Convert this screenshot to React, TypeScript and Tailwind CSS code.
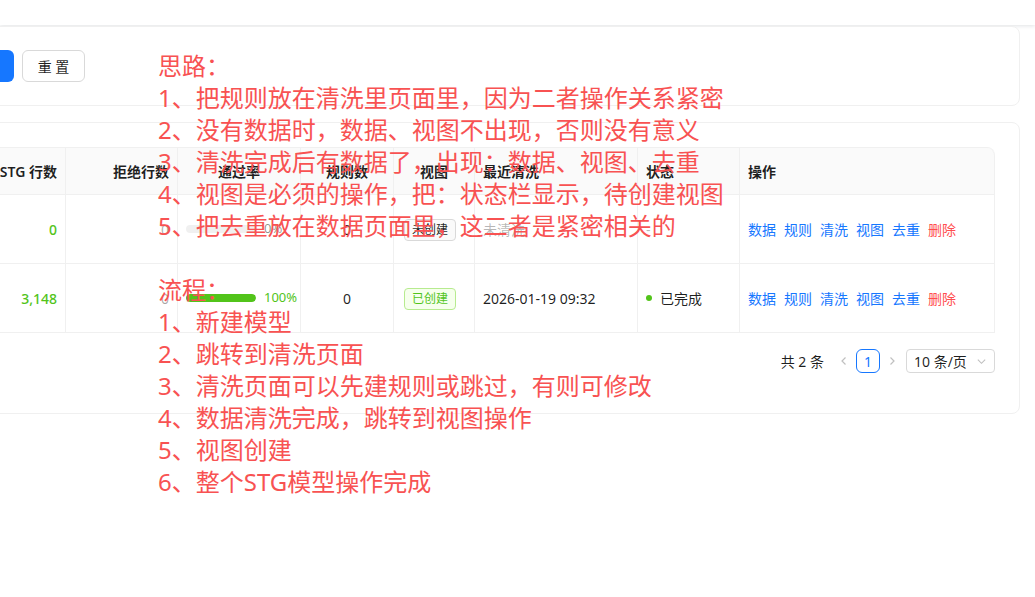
import React from 'react';

type Row = {
  name: string;
  source: string;
  srcRows: string;
  stgRows: string;
  rejected: string;
  rate: number;
  rules: string;
  viewCreated: boolean;
  lastClean: string | null;
  done: boolean;
};

const rows: Row[] = [
  { name: 'stg_customer_info', source: 'ods.customer_info', srcRows: '0', stgRows: '0', rejected: '0', rate: 0, rules: '0', viewCreated: false, lastClean: null, done: false },
  { name: 'stg_order_detail', source: 'ods.order_detail', srcRows: '3,148', stgRows: '3,148', rejected: '0', rate: 100, rules: '0', viewCreated: true, lastClean: '2026-01-19 09:32', done: true },
];

const notes = [
  '思路：',
  '1、把规则放在清洗里页面里，因为二者操作关系紧密',
  '2、没有数据时，数据、视图不出现，否则没有意义',
  '3、清洗完成后有数据了，出现：数据、视图、去重',
  '4、视图是必须的操作，把：状态栏显示，待创建视图',
  '5、把去重放在数据页面里，这二者是紧密相关的',
  '',
  '流程：',
  '1、新建模型',
  '2、跳转到清洗页面',
  '3、清洗页面可以先建规则或跳过，有则可修改',
  '4、数据清洗完成，跳转到视图操作',
  '5、视图创建',
  '6、整个STG模型操作完成',
];

const th = 'h-[47px] px-2 border-r border-b border-[#f0f0f0] font-semibold text-[rgba(0,0,0,0.88)] text-[14px]';
// cell base, text colour is set per cell
const td = 'h-[69px] px-2 border-r border-b border-[#f0f0f0] text-[14px]';
const ink = 'text-[rgba(0,0,0,0.88)]';

export default function App() {
  return (
    <div className="relative min-h-screen w-full overflow-hidden bg-white font-['Noto_Sans','Noto_Sans_CJK_SC',sans-serif]">
      {/* top bar */}
      <div className="h-[25px] bg-white shadow-[0_1px_4px_rgba(0,21,41,0.12)]" />

      <div className="ml-[-600px] pl-4 pr-[15px] pt-[1px]">
        {/* search card */}
        <div className="h-[80px] rounded-lg border border-[#f0f0f0] bg-white px-6 flex items-center gap-4">
          <div className="flex items-center gap-2 text-[14px]">
            <span>模型名称：</span>
            <div className="h-8 w-[200px] rounded-md border border-[#d9d9d9]" />
          </div>
          <div className="flex items-center gap-2 text-[14px]">
            <span>状态：</span>
            <div className="h-8 w-[150px] rounded-md border border-[#d9d9d9]" />
          </div>
          <div className="flex items-center gap-2">
            <button className="h-8 w-[63px] rounded-md bg-[#1677ff] text-white text-[14px]">查 询</button>
            <button className="h-8 w-[63px] rounded-md border border-[#d9d9d9] bg-white text-[14px] text-[rgba(0,0,0,0.88)]">重 置</button>
          </div>
        </div>

        {/* table card */}
        <div className="mt-4 rounded-lg border border-[#f0f0f0] bg-white px-6 pt-6 pb-6">
          <table className="w-full table-fixed border-separate border-spacing-0 border-l border-t border-[#f0f0f0] rounded-t-lg">
            <colgroup>
              <col className="w-[200px]" />
              <col className="w-[200px]" />
              <col className="w-[112px]" />
              <col className="w-[112px]" />
              <col className="w-[112px]" />
              <col className="w-[123px]" />
              <col className="w-[93px]" />
              <col className="w-[81px]" />
              <col className="w-[163px]" />
              <col className="w-[102px]" />
              <col />
            </colgroup>
            <thead className="bg-[#fafafa]">
              <tr>
                <th className={`${th} text-left rounded-tl-lg`}>模型名称</th>
                <th className={`${th} text-left`}>源表</th>
                <th className={`${th} text-right`}>源行数</th>
                <th className={`${th} text-right`}>STG 行数</th>
                <th className={`${th} text-right`}>拒绝行数</th>
                <th className={`${th} text-center`}>通过率</th>
                <th className={`${th} text-center`}>规则数</th>
                <th className={`${th} text-center`}>视图</th>
                <th className={`${th} text-left`}>最近清洗</th>
                <th className={`${th} text-left`}>状态</th>
                <th className={`${th} text-left rounded-tr-lg`}>操作</th>
              </tr>
            </thead>
            <tbody>
              {rows.map((r) => (
                <tr key={r.name}>
                  <td className={`${td} ${ink}`}>{r.name}</td>
                  <td className={`${td} ${ink}`}>{r.source}</td>
                  <td className={`${td} ${ink} text-right`}>{r.srcRows}</td>
                  <td className={`${td} text-right font-medium text-[#52c41a]`}>{r.stgRows}</td>
                  <td className={`${td} text-right text-[rgba(0,0,0,0.35)]`}>{r.rejected}</td>
                  <td className={td}>
                    <div className="flex items-center whitespace-nowrap">
                      <div className="h-2 w-[70px] shrink-0 rounded-full bg-[rgba(0,0,0,0.06)] overflow-hidden">
                        <div className="h-full rounded-full bg-[#52c41a]" style={{ width: `${r.rate}%` }} />
                      </div>
                      <span className={`ml-2 shrink-0 text-[13px] ${r.rate === 100 ? 'text-[#52c41a]' : 'text-[rgba(0,0,0,0.45)]'}`}>{r.rate}%</span>
                    </div>
                  </td>
                  <td className={`${td} ${ink} text-center`}>{r.rules}</td>
                  <td className={`${td} text-center`}>
                    {r.viewCreated ? (
                      <span className="mr-2 inline-block h-[22px] leading-[20px] rounded px-[7px] border border-[#b7eb8f] bg-[#f6ffed] text-[12px] text-[#52c41a]">已创建</span>
                    ) : (
                      <span className="mr-2 inline-block h-[22px] leading-[20px] rounded px-[7px] border border-[#d9d9d9] bg-[#fafafa] text-[12px] text-[rgba(0,0,0,0.88)]">未创建</span>
                    )}
                  </td>
                  <td className={`${td} ${ink}`}>
                    {r.lastClean ? r.lastClean : <span className="text-[rgba(0,0,0,0.3)]">未清洗</span>}
                  </td>
                  <td className={`${td} ${ink}`}>
                    {r.done ? (
                      <span className="flex items-center gap-2">
                        <span className="h-1.5 w-1.5 rounded-full bg-[#52c41a]" />
                        已完成
                      </span>
                    ) : (
                      <span className="text-[rgba(0,0,0,0.3)]">-</span>
                    )}
                  </td>
                  <td className={td}>
                    <div className="flex items-center gap-2">
                      {['数据', '规则', '清洗', '视图', '去重'].map((a) => (
                        <a key={a} className="text-[#1677ff] cursor-pointer">{a}</a>
                      ))}
                      <a className="text-[#ff4d4f] cursor-pointer">删除</a>
                    </div>
                  </td>
                </tr>
              ))}
            </tbody>
          </table>

          {/* pagination */}
          <div className="my-4 flex h-6 items-center justify-end text-[14px] text-[rgba(0,0,0,0.88)]">
            <span className="mr-2">共 2 条</span>
            <span className="flex h-6 w-6 items-center justify-center text-[rgba(0,0,0,0.25)]">
              <svg width="10" height="10" viewBox="0 0 10 10" fill="none" stroke="currentColor" strokeWidth="1.2"><path d="M6.5 1.5 3 5l3.5 3.5" /></svg>
            </span>
            <span className="flex h-6 w-6 items-center justify-center rounded-md border border-[#1677ff] text-[#1677ff]">1</span>
            <span className="flex h-6 w-6 items-center justify-center text-[rgba(0,0,0,0.25)]">
              <svg width="10" height="10" viewBox="0 0 10 10" fill="none" stroke="currentColor" strokeWidth="1.2"><path d="M3.5 1.5 7 5 3.5 8.5" /></svg>
            </span>
            <div className="ml-[2px] flex h-6 w-[89px] items-center justify-between rounded border border-[#d9d9d9] pl-[7px] pr-[7px]">
              <span>10 条/页</span>
              <svg width="11" height="11" viewBox="0 0 12 12" fill="none" stroke="rgba(0,0,0,0.25)" strokeWidth="1.2"><path d="M2 4l4 4 4-4" /></svg>
            </div>
          </div>
        </div>
      </div>

      {/* red annotation overlay */}
      <div className="pointer-events-none absolute left-[158px] top-[50px] whitespace-pre text-[24px] leading-[32px] text-[#f85252] font-['Noto_Sans','Noto_Sans_CJK_SC',sans-serif]">
        {notes.map((n, i) => (
          <div key={i} className="h-[32px]">{n}</div>
        ))}
      </div>
    </div>
  );
}
